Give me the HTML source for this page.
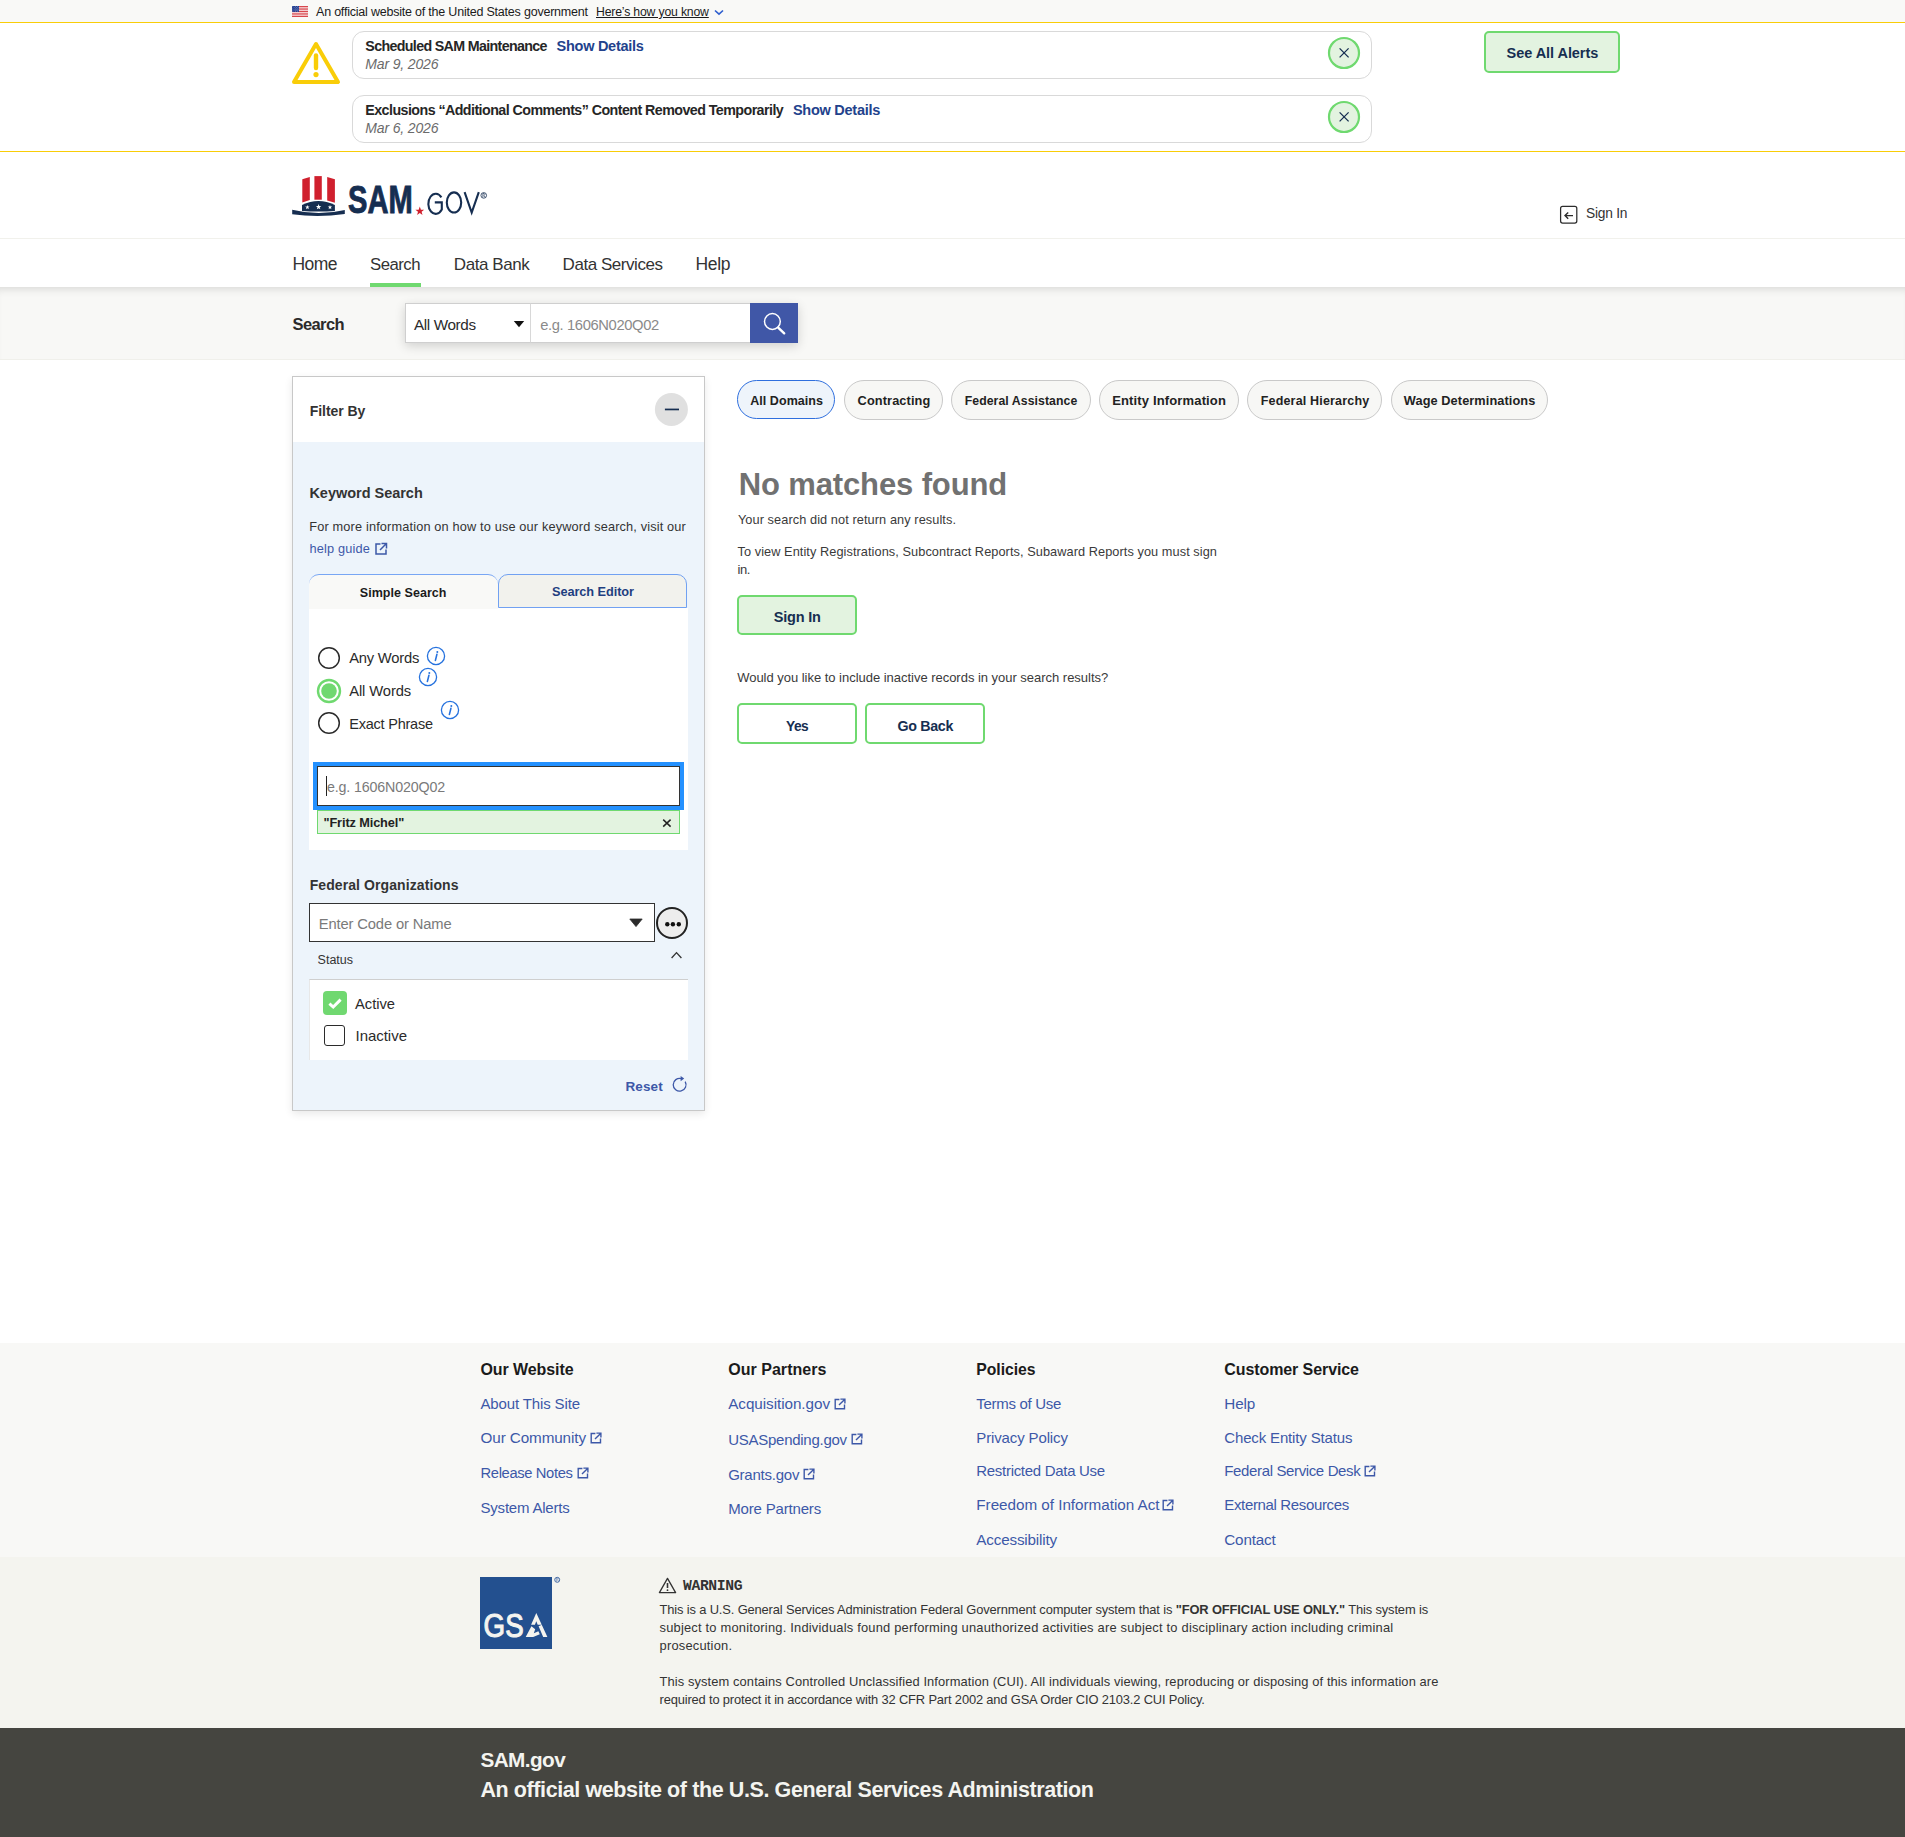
<!DOCTYPE html>
<html><head><meta charset="utf-8"><title>SAM.gov Search</title>
<style>
html,body{margin:0;padding:0}
body{width:1905px;height:1837px;position:relative;overflow:hidden;background:#fff;font-family:"Liberation Sans",sans-serif}
.abs{position:absolute;box-sizing:content-box}
.t{position:absolute;white-space:nowrap;line-height:1}
svg{overflow:visible}
</style></head><body>
<div class="abs" style="left:0;top:0;width:1905px;height:22px;background:#f9f9f7"></div>
<svg class="abs" style="left:292px;top:6px" width="16" height="11" viewBox="0 0 16 11">
<rect width="16" height="11" fill="#fff"/>
<g fill="#d0262e"><rect y="0.000" width="16" height="0.846"/><rect y="1.692" width="16" height="0.846"/><rect y="3.385" width="16" height="0.846"/><rect y="5.077" width="16" height="0.846"/><rect y="6.769" width="16" height="0.846"/><rect y="8.462" width="16" height="0.846"/><rect y="10.154" width="16" height="0.846"/></g>
<rect width="7" height="5.9" fill="#1f3b8f"/>
<g fill="#fff"><circle cx="0.90" cy="0.80" r=".38"/><circle cx="3.30" cy="0.80" r=".38"/><circle cx="5.70" cy="0.80" r=".38"/><circle cx="2.10" cy="1.85" r=".38"/><circle cx="4.50" cy="1.85" r=".38"/><circle cx="6.90" cy="1.85" r=".38"/><circle cx="0.90" cy="2.90" r=".38"/><circle cx="3.30" cy="2.90" r=".38"/><circle cx="5.70" cy="2.90" r=".38"/><circle cx="2.10" cy="3.95" r=".38"/><circle cx="4.50" cy="3.95" r=".38"/><circle cx="6.90" cy="3.95" r=".38"/><circle cx="0.90" cy="5.00" r=".38"/><circle cx="3.30" cy="5.00" r=".38"/><circle cx="5.70" cy="5.00" r=".38"/></g>
</svg>
<div class="t" style="left:316.00px;top:6.00px;font-size:12.5px;font-weight:normal;font-style:normal;font-family:'Liberation Sans',sans-serif;letter-spacing:-0.211px;color:#1b1b1b;">An official website of the United States government</div>
<div class="t" style="left:596.00px;top:6.00px;font-size:12.25px;font-weight:normal;font-style:normal;font-family:'Liberation Sans',sans-serif;letter-spacing:-0.181px;color:#1b1b1b;text-decoration:underline;text-underline-offset:1px">Here’s how you know</div>
<svg class="abs" style="left:714px;top:9px" width="10" height="7" viewBox="0 0 10 7"><path d="M1 1.5 L5 5.2 L9 1.5" fill="none" stroke="#2f5fcf" stroke-width="1.6"/></svg>
<div class="abs" style="left:0;top:22px;width:1905px;height:1px;background:#f9cd08"></div>
<div class="abs" style="left:0;top:151px;width:1905px;height:1px;background:#f9cd08"></div>
<svg class="abs" style="left:290px;top:40px" width="52" height="46" viewBox="0 0 52 46">
<path d="M26 4 L48 42 L4 42 Z" fill="none" stroke="#f9cd08" stroke-width="4" stroke-linejoin="round"/>
<path d="M26 15.5 L26 28" stroke="#f9cd08" stroke-width="4.4" stroke-linecap="round"/>
<circle cx="26" cy="34.6" r="2.6" fill="#f9cd08"/>
</svg>
<div class="abs" style="left:352px;top:31px;width:1018px;height:46px;border:1px solid #d9d9d9;border-radius:12px;background:#fff"></div>
<svg class="abs" style="left:1327px;top:35.6px" width="34" height="34" viewBox="0 0 34 34">
<circle cx="17" cy="17" r="15" fill="#e3f3e0" stroke="#6fd96f" stroke-width="2.2"/>
<path d="M12.6 12.4 L21.6 21.4 M21.6 12.4 L12.6 21.4" stroke="#162e51" stroke-width="1.3"/>
</svg>
<div class="abs" style="left:352px;top:95px;width:1018px;height:46px;border:1px solid #d9d9d9;border-radius:12px;background:#fff"></div>
<svg class="abs" style="left:1327px;top:99.6px" width="34" height="34" viewBox="0 0 34 34">
<circle cx="17" cy="17" r="15" fill="#e3f3e0" stroke="#6fd96f" stroke-width="2.2"/>
<path d="M12.6 12.4 L21.6 21.4 M21.6 12.4 L12.6 21.4" stroke="#162e51" stroke-width="1.3"/>
</svg>
<div class="t" style="left:365.30px;top:39.00px;font-size:14.25px;font-weight:bold;font-style:normal;font-family:'Liberation Sans',sans-serif;letter-spacing:-0.656px;color:#262626;">Scheduled SAM Maintenance</div>
<div class="t" style="left:556.60px;top:39.00px;font-size:14.5px;font-weight:bold;font-style:normal;font-family:'Liberation Sans',sans-serif;letter-spacing:-0.277px;color:#22428c;">Show Details</div>
<div class="t" style="left:365.30px;top:57.00px;font-size:14.0px;font-weight:normal;font-style:italic;font-family:'Liberation Sans',sans-serif;letter-spacing:-0.150px;color:#6b6b6b;">Mar 9, 2026</div>
<div class="t" style="left:365.30px;top:103.00px;font-size:14.25px;font-weight:bold;font-style:normal;font-family:'Liberation Sans',sans-serif;letter-spacing:-0.553px;color:#262626;">Exclusions “Additional Comments” Content Removed Temporarily</div>
<div class="t" style="left:792.90px;top:103.00px;font-size:14.5px;font-weight:bold;font-style:normal;font-family:'Liberation Sans',sans-serif;letter-spacing:-0.250px;color:#22428c;">Show Details</div>
<div class="t" style="left:365.30px;top:121.00px;font-size:14.0px;font-weight:normal;font-style:italic;font-family:'Liberation Sans',sans-serif;letter-spacing:-0.150px;color:#6b6b6b;">Mar 6, 2026</div>
<div class="abs" style="left:1484px;top:31px;width:132px;height:38px;border:2px solid #6fd96f;border-radius:5px;background:#e3f3e0"></div>
<div class="t" style="left:1506.60px;top:46.00px;font-size:14.5px;font-weight:bold;font-style:normal;font-family:'Liberation Sans',sans-serif;letter-spacing:-0.054px;color:#162e51;">See All Alerts</div>
<svg class="abs" style="left:290px;top:174px" width="200" height="46" viewBox="290 174 200 46">
<g fill="#d0202e">
<path d="M302.3 179.2 L309.8 176.9 L309.8 200 L302.3 202.6 Z"/>
<path d="M314.4 176.1 L321.8 176.1 L321.8 199.7 L314.4 199.7 Z"/>
<path d="M327.2 176.9 L334.9 179.3 L334.9 202.8 L327.2 200.5 Z"/>
</g>
<path d="M302 210.9 L302 204.9 Q318.4 197.3 334.9 204.9 L334.9 210.9 Q318.4 212.2 302 210.9 Z" fill="#162e51"/>
<path d="M307.40,204.90 L307.96,206.52 L309.68,206.56 L308.31,207.60 L308.81,209.24 L307.40,208.26 L305.99,209.24 L306.49,207.60 L305.12,206.56 L306.84,206.52 Z M318.60,204.10 L319.28,206.06 L321.36,206.10 L319.70,207.36 L320.30,209.35 L318.60,208.16 L316.90,209.35 L317.50,207.36 L315.84,206.10 L317.92,206.06 Z M330.00,204.90 L330.56,206.52 L332.28,206.56 L330.91,207.60 L331.41,209.24 L330.00,208.26 L328.59,209.24 L329.09,207.60 L327.72,206.56 L329.44,206.52 Z" fill="#fff"/>
<path d="M292.2 209.7 Q318.4 216.2 344.8 209.9 L344.8 213.9 Q318.4 218 292.2 214.2 Z" fill="#162e51"/>
<text x="348.1" y="213.1" font-family="Liberation Sans" font-weight="bold" font-size="38.2" fill="#162e51" stroke="#162e51" stroke-width="0.9" textLength="64.6" lengthAdjust="spacingAndGlyphs">SAM</text>
<path d="M419.80,206.60 L420.92,209.66 L424.17,209.78 L421.61,211.79 L422.50,214.92 L419.80,213.10 L417.10,214.92 L417.99,211.79 L415.43,209.78 L418.68,209.66 Z" fill="#d0202e"/>
<g fill="none" stroke="#162e51" stroke-width="2.1">
<path d="M441.4 197.4 A7.4 10.05 0 1 0 441.8 209.6 L441.8 202.4 L434.8 202.4"/>
<ellipse cx="454" cy="202.45" rx="7.2" ry="10.05"/>
<path d="M464.6 192.2 L471.7 212.5 L478.8 192.2"/>
</g>
<circle cx="483.75" cy="195.4" r="2.8" fill="none" stroke="#162e51" stroke-width=".8"/>
<path d="M482.9 197.3 L482.9 193.6 L484.2 193.6 Q485.4 194.4 484.1 195.5 L485.1 197.3" fill="none" stroke="#162e51" stroke-width=".7"/>
</svg>
<svg class="abs" style="left:1559px;top:205px" width="20" height="20" viewBox="0 0 20 20">
<rect x="1.6" y="1.4" width="16.2" height="16.6" rx="2" fill="none" stroke="#2d2d2d" stroke-width="1.25"/>
<path d="M14 10.6 L6 10.6 M9.2 7.4 L6 10.6 L9.2 13.8" fill="none" stroke="#2d2d2d" stroke-width="1.4"/>
</svg>
<div class="t" style="left:1586.00px;top:207.00px;font-size:13.75px;font-weight:normal;font-style:normal;font-family:'Liberation Sans',sans-serif;letter-spacing:-0.217px;color:#333;">Sign In</div>
<div class="abs" style="left:0;top:238px;width:1905px;height:1px;background:#f1f1ec"></div>
<div class="t" style="left:292.60px;top:256.00px;font-size:17.5px;font-weight:normal;font-style:normal;font-family:'Liberation Sans',sans-serif;letter-spacing:-0.633px;color:#333;">Home</div>
<div class="t" style="left:370.00px;top:257.00px;font-size:16.75px;font-weight:normal;font-style:normal;font-family:'Liberation Sans',sans-serif;letter-spacing:-0.510px;color:#333;">Search</div>
<div class="t" style="left:453.80px;top:256.00px;font-size:17.0px;font-weight:normal;font-style:normal;font-family:'Liberation Sans',sans-serif;letter-spacing:-0.419px;color:#333;">Data Bank</div>
<div class="t" style="left:562.60px;top:256.00px;font-size:17.0px;font-weight:normal;font-style:normal;font-family:'Liberation Sans',sans-serif;letter-spacing:-0.458px;color:#333;">Data Services</div>
<div class="t" style="left:695.60px;top:256.00px;font-size:17.5px;font-weight:normal;font-style:normal;font-family:'Liberation Sans',sans-serif;letter-spacing:-0.400px;color:#333;">Help</div>
<div class="abs" style="left:370px;top:283px;width:51px;height:4px;background:#6fd96f"></div>
<div class="abs" style="left:0;top:287px;width:1905px;height:72px;background:#f8f8f6;box-shadow:inset 0 8px 8px -6px rgba(0,0,0,.13)"></div>
<div class="abs" style="left:0;top:359px;width:1905px;height:1px;background:#f0f0eb"></div>
<div class="t" style="left:292.50px;top:316.00px;font-size:16.5px;font-weight:bold;font-style:normal;font-family:'Liberation Sans',sans-serif;letter-spacing:-0.590px;color:#2b2b2b;">Search</div>
<div class="abs" style="left:405px;top:303px;width:393px;height:40px;box-shadow:0 3px 10px rgba(0,0,0,.16)"></div>
<div class="abs" style="left:405px;top:303px;width:124px;height:38px;border:1px solid #cfcfcf;background:#fff"></div>
<div class="t" style="left:414.00px;top:317.00px;font-size:15.25px;font-weight:normal;font-style:normal;font-family:'Liberation Sans',sans-serif;letter-spacing:-0.369px;color:#2b2b2b;">All Words</div>
<svg class="abs" style="left:513px;top:320px" width="12" height="8" viewBox="0 0 12 8"><path d="M0.8 1 L11.2 1 L6 7.2 Z" fill="#111"/></svg>
<div class="abs" style="left:530px;top:303px;width:219px;height:38px;border:1px solid #cfcfcf;border-left:1px solid #d8d8d8;background:#fff"></div>
<div class="t" style="left:540.20px;top:318.00px;font-size:14.75px;font-weight:normal;font-style:normal;font-family:'Liberation Sans',sans-serif;letter-spacing:-0.377px;color:#8a8a8a;">e.g. 1606N020Q02</div>
<div class="abs" style="left:750px;top:303px;width:48px;height:40px;background:#4057a7"></div>
<svg class="abs" style="left:760px;top:310px" width="28" height="28" viewBox="0 0 28 28">
<circle cx="12.4" cy="11.5" r="7.9" fill="none" stroke="#fff" stroke-width="1.5"/>
<path d="M18.2 17.6 L24.2 23.3" stroke="#fff" stroke-width="2.4" stroke-linecap="round"/>
</svg>
<div class="abs" style="left:292px;top:376px;width:411px;height:733px;border:1px solid #c8c8c8;background:#edf4fb;box-shadow:0 3px 8px rgba(0,0,0,.09)"></div>
<div class="abs" style="left:293px;top:377px;width:411px;height:65px;background:#fff"></div>
<div class="t" style="left:309.80px;top:404.00px;font-size:14.0px;font-weight:bold;font-style:normal;font-family:'Liberation Sans',sans-serif;letter-spacing:-0.062px;color:#333;">Filter By</div>
<svg class="abs" style="left:654px;top:392px" width="34" height="34" viewBox="0 0 34 34"><circle cx="17.4" cy="17.4" r="16.5" fill="#e0e0e0"/><rect x="10.9" y="16.6" width="14.1" height="1.7" fill="#162e51"/></svg>
<div class="t" style="left:309.40px;top:486.00px;font-size:14.5px;font-weight:bold;font-style:normal;font-family:'Liberation Sans',sans-serif;letter-spacing:-0.019px;color:#333;">Keyword Search</div>
<div class="t" style="left:309.30px;top:521.00px;font-size:12.75px;font-weight:normal;font-style:normal;font-family:'Liberation Sans',sans-serif;letter-spacing:0.150px;color:#333;">For more information on how to use our keyword search, visit our</div>
<div class="t" style="left:309.40px;top:543.00px;font-size:12.75px;font-weight:normal;font-style:normal;font-family:'Liberation Sans',sans-serif;letter-spacing:0.172px;color:#3d58a8;">help guide</div>
<svg class="abs" style="left:374px;top:542px" width="14" height="14" viewBox="0 0 14 14"><path d="M6.5 2 L2 2 L2 12 L12 12 L12 7.5" fill="none" stroke="#3d58a8" stroke-width="1.5"/><path d="M7.5 1.5 L12.5 1.5 L12.5 6.5 M12.2 1.8 L6 8" fill="none" stroke="#3d58a8" stroke-width="1.5"/></svg>
<div class="abs" style="left:309px;top:608px;width:379px;height:242px;background:#fff"></div>
<div class="abs" style="left:309px;top:574px;width:189px;height:34px;background:#f9f9f7;border-top:1.5px solid #78a6f4;border-radius:10px 10px 0 0"></div>
<div class="abs" style="left:498px;top:574px;width:187px;height:31.5px;background:#f2f2ed;border:1.5px solid #71a1f2;border-radius:10px 10px 0 0"></div>
<div class="t" style="left:359.80px;top:587.00px;font-size:12.5px;font-weight:bold;font-style:normal;font-family:'Liberation Sans',sans-serif;letter-spacing:0.046px;color:#1b1b1b;">Simple Search</div>
<div class="t" style="left:552.00px;top:586.00px;font-size:12.75px;font-weight:bold;font-style:normal;font-family:'Liberation Sans',sans-serif;letter-spacing:-0.075px;color:#1f3f80;">Search Editor</div>
<svg class="abs" style="left:317px;top:646px" width="24" height="24" viewBox="0 0 24 24"><circle cx="12" cy="12" r="10.3" fill="#fff" stroke="#2b2b2b" stroke-width="1.5"/></svg>
<svg class="abs" style="left:317px;top:711px" width="24" height="24" viewBox="0 0 24 24"><circle cx="12" cy="12" r="10.3" fill="#fff" stroke="#2b2b2b" stroke-width="1.5"/></svg>
<svg class="abs" style="left:316px;top:678px" width="26" height="26" viewBox="0 0 26 26"><circle cx="13" cy="13" r="11" fill="#fff" stroke="#6fd96f" stroke-width="2.4"/><circle cx="13" cy="13" r="7.8" fill="#70d870"/></svg>
<div class="t" style="left:349.20px;top:651.00px;font-size:14.75px;font-weight:normal;font-style:normal;font-family:'Liberation Sans',sans-serif;letter-spacing:-0.219px;color:#2b2b2b;">Any Words</div>
<div class="t" style="left:349.20px;top:684.00px;font-size:14.75px;font-weight:normal;font-style:normal;font-family:'Liberation Sans',sans-serif;letter-spacing:-0.100px;color:#2b2b2b;">All Words</div>
<div class="t" style="left:349.20px;top:717.00px;font-size:14.5px;font-weight:normal;font-style:normal;font-family:'Liberation Sans',sans-serif;letter-spacing:-0.214px;color:#2b2b2b;">Exact Phrase</div>
<svg class="abs" style="left:426.2px;top:646.2px" width="20" height="20" viewBox="0 0 20 20"><circle cx="10" cy="10" r="8.6" fill="none" stroke="#2672de" stroke-width="1.3"/><path d="M10.9 8.4 L9.4 14.4" stroke="#2672de" stroke-width="1.6" stroke-linecap="round"/><circle cx="11.3" cy="5.9" r="1" fill="#2672de"/></svg>
<svg class="abs" style="left:418.2px;top:667.2px" width="20" height="20" viewBox="0 0 20 20"><circle cx="10" cy="10" r="8.6" fill="none" stroke="#2672de" stroke-width="1.3"/><path d="M10.9 8.4 L9.4 14.4" stroke="#2672de" stroke-width="1.6" stroke-linecap="round"/><circle cx="11.3" cy="5.9" r="1" fill="#2672de"/></svg>
<svg class="abs" style="left:440.1px;top:700.2px" width="20" height="20" viewBox="0 0 20 20"><circle cx="10" cy="10" r="8.6" fill="none" stroke="#2672de" stroke-width="1.3"/><path d="M10.9 8.4 L9.4 14.4" stroke="#2672de" stroke-width="1.6" stroke-linecap="round"/><circle cx="11.3" cy="5.9" r="1" fill="#2672de"/></svg>
<div class="abs" style="left:313px;top:762px;width:371px;height:48px;background:#2491ff"></div>
<div class="abs" style="left:317px;top:766px;width:361px;height:38px;border:1px solid #333;background:#fff"></div>
<div class="t" style="left:327.00px;top:780.00px;font-size:14.25px;font-weight:normal;font-style:normal;font-family:'Liberation Sans',sans-serif;letter-spacing:-0.150px;color:#7a7a7a;">e.g. 1606N020Q02</div>
<div class="abs" style="left:326px;top:776px;width:1px;height:20px;background:#222"></div>
<div class="abs" style="left:317px;top:810px;width:361px;height:22px;border:1px solid #6fd96f;background:#e3f3e0"></div>
<div class="t" style="left:323.50px;top:817.00px;font-size:12.75px;font-weight:bold;font-style:normal;font-family:'Liberation Sans',sans-serif;letter-spacing:-0.115px;color:#222;">&quot;Fritz Michel&quot;</div>
<svg class="abs" style="left:661px;top:817px" width="12" height="12" viewBox="0 0 12 12"><path d="M2.2 2.6 L9.6 9.6 M9.6 2.6 L2.2 9.6" stroke="#222" stroke-width="1.5"/></svg>
<div class="t" style="left:309.70px;top:878.00px;font-size:14.0px;font-weight:bold;font-style:normal;font-family:'Liberation Sans',sans-serif;letter-spacing:0.087px;color:#333;">Federal Organizations</div>
<div class="abs" style="left:309px;top:903px;width:344px;height:37px;border:1.5px solid #333;background:#fff"></div>
<div class="t" style="left:318.70px;top:917.00px;font-size:14.75px;font-weight:normal;font-style:normal;font-family:'Liberation Sans',sans-serif;letter-spacing:-0.132px;color:#7a7a7a;">Enter Code or Name</div>
<svg class="abs" style="left:629px;top:918px" width="14" height="10" viewBox="0 0 14 10"><path d="M0.8 1 L13.2 1 L7 8.6 Z" fill="#2b2b2b" stroke="#2b2b2b" stroke-width=".8" stroke-linejoin="round"/></svg>
<svg class="abs" style="left:655px;top:906px" width="34" height="34" viewBox="0 0 34 34"><circle cx="17" cy="17" r="15" fill="#ededed" stroke="#222" stroke-width="2"/><circle cx="12.3" cy="18.2" r="2.2" fill="#111"/><circle cx="17.9" cy="18.2" r="2.2" fill="#111"/><circle cx="23.8" cy="18.2" r="2.2" fill="#111"/></svg>
<div class="t" style="left:317.60px;top:954.00px;font-size:12.5px;font-weight:normal;font-style:normal;font-family:'Liberation Sans',sans-serif;letter-spacing:-0.010px;color:#333;">Status</div>
<svg class="abs" style="left:670px;top:950px" width="13" height="10" viewBox="0 0 13 10"><path d="M1.6 8 L6.5 2.6 L11.4 8" fill="none" stroke="#333" stroke-width="1.3"/></svg>
<div class="abs" style="left:309px;top:979px;width:378px;height:80px;border-top:1.5px solid #cfcfcf;border-left:1px solid #e8e8e8;background:#fff"></div>
<svg class="abs" style="left:323px;top:991px" width="24" height="24" viewBox="0 0 24 24"><rect width="24" height="24" rx="4" fill="#70d870"/><path d="M6.4 12.6 L10.2 16 L17.6 8.6" fill="none" stroke="#fff" stroke-width="3"/></svg>
<div class="abs" style="left:324px;top:1025px;width:19px;height:19px;border:1.6px solid #2b2b2b;border-radius:3px;background:#fff"></div>
<div class="t" style="left:355.00px;top:997.00px;font-size:14.75px;font-weight:normal;font-style:normal;font-family:'Liberation Sans',sans-serif;letter-spacing:-0.030px;color:#2b2b2b;">Active</div>
<div class="t" style="left:355.50px;top:1028.00px;font-size:15.0px;font-weight:normal;font-style:normal;font-family:'Liberation Sans',sans-serif;letter-spacing:-0.029px;color:#2b2b2b;">Inactive</div>
<div class="t" style="left:625.50px;top:1080.00px;font-size:13.5px;font-weight:bold;font-style:normal;font-family:'Liberation Sans',sans-serif;letter-spacing:0.113px;color:#3d58a8;">Reset</div>
<svg class="abs" style="left:671px;top:1074px" width="18" height="19" viewBox="0 0 18 19"><path d="M10.4 4.6 A6.4 6.4 0 1 0 14.2 7.6" fill="none" stroke="#3d58a8" stroke-width="1.3"/><path d="M9.6 2 L13.2 4.4 L9.6 7.2 Z" fill="#3d58a8"/></svg>
<div class="abs" style="left:737px;top:380px;width:96.0px;height:37px;border:1.5px solid #2f6fde;border-radius:20px;background:#eef4fb"></div>
<div class="t" style="left:750.20px;top:395.00px;font-size:12.5px;font-weight:bold;font-style:normal;font-family:'Liberation Sans',sans-serif;letter-spacing:0.055px;color:#222;">All Domains</div>
<div class="abs" style="left:844px;top:380px;width:96.5px;height:38px;border:1px solid #c9c9c9;border-radius:20px;background:#f7f7f5"></div>
<div class="t" style="left:857.60px;top:395.00px;font-size:12.75px;font-weight:bold;font-style:normal;font-family:'Liberation Sans',sans-serif;letter-spacing:0.115px;color:#222;">Contracting</div>
<div class="abs" style="left:951px;top:380px;width:137.5px;height:38px;border:1px solid #c9c9c9;border-radius:20px;background:#f7f7f5"></div>
<div class="t" style="left:964.70px;top:395.00px;font-size:12.25px;font-weight:bold;font-style:normal;font-family:'Liberation Sans',sans-serif;letter-spacing:0.076px;color:#222;">Federal Assistance</div>
<div class="abs" style="left:1099.2px;top:380px;width:137.4px;height:38px;border:1px solid #c9c9c9;border-radius:20px;background:#f7f7f5"></div>
<div class="t" style="left:1112.20px;top:394.00px;font-size:13.0px;font-weight:bold;font-style:normal;font-family:'Liberation Sans',sans-serif;letter-spacing:0.147px;color:#222;">Entity Information</div>
<div class="abs" style="left:1247.1px;top:380px;width:133.4px;height:38px;border:1px solid #c9c9c9;border-radius:20px;background:#f7f7f5"></div>
<div class="t" style="left:1260.70px;top:395.00px;font-size:12.5px;font-weight:bold;font-style:normal;font-family:'Liberation Sans',sans-serif;letter-spacing:0.181px;color:#222;">Federal Hierarchy</div>
<div class="abs" style="left:1391.2px;top:380px;width:155.3px;height:38px;border:1px solid #c9c9c9;border-radius:20px;background:#f7f7f5"></div>
<div class="t" style="left:1403.80px;top:395.00px;font-size:12.75px;font-weight:bold;font-style:normal;font-family:'Liberation Sans',sans-serif;letter-spacing:0.089px;color:#222;">Wage Determinations</div>
<div class="t" style="left:738.70px;top:469.00px;font-size:31.0px;font-weight:bold;font-style:normal;font-family:'Liberation Sans',sans-serif;letter-spacing:-0.127px;color:#717171;">No matches found</div>
<div class="t" style="left:737.90px;top:514.00px;font-size:12.75px;font-weight:normal;font-style:normal;font-family:'Liberation Sans',sans-serif;letter-spacing:0.082px;color:#3a3a3a;">Your search did not return any results.</div>
<div class="t" style="left:737.50px;top:546.00px;font-size:12.75px;font-weight:normal;font-style:normal;font-family:'Liberation Sans',sans-serif;letter-spacing:0.067px;color:#3a3a3a;">To view Entity Registrations, Subcontract Reports, Subaward Reports you must sign</div>
<div class="t" style="left:737.50px;top:562.50px;font-size:13.0px;font-weight:normal;font-style:normal;font-family:'Liberation Sans',sans-serif;letter-spacing:-0.375px;color:#3a3a3a;">in.</div>
<div class="abs" style="left:737px;top:595px;width:116px;height:36px;border:2px solid #6fd96f;border-radius:5px;background:#e3f3e0"></div>
<div class="t" style="left:773.80px;top:610.00px;font-size:14.5px;font-weight:bold;font-style:normal;font-family:'Liberation Sans',sans-serif;letter-spacing:-0.192px;color:#162e51;">Sign In</div>
<div class="t" style="left:737.20px;top:671.00px;font-size:13.0px;font-weight:normal;font-style:normal;font-family:'Liberation Sans',sans-serif;letter-spacing:-0.025px;color:#3a3a3a;">Would you like to include inactive records in your search results?</div>
<div class="abs" style="left:737px;top:703px;width:116px;height:37px;border:2px solid #6fd96f;border-radius:5px;background:#fff"></div>
<div class="abs" style="left:865px;top:703px;width:116px;height:37px;border:2px solid #6fd96f;border-radius:5px;background:#fff"></div>
<div class="t" style="left:786.00px;top:720.00px;font-size:13.75px;font-weight:bold;font-style:normal;font-family:'Liberation Sans',sans-serif;letter-spacing:-0.500px;color:#162e51;">Yes</div>
<div class="t" style="left:897.40px;top:719.00px;font-size:14.25px;font-weight:bold;font-style:normal;font-family:'Liberation Sans',sans-serif;letter-spacing:-0.308px;color:#162e51;">Go Back</div>
<div class="abs" style="left:0;top:1343px;width:1905px;height:214px;background:#f8f8f6"></div>
<div class="abs" style="left:0;top:1557px;width:1905px;height:171px;background:#f4f4ef"></div>
<div class="abs" style="left:0;top:1728px;width:1905px;height:109px;background:#454540"></div>
<div class="t" style="left:480.50px;top:1362.00px;font-size:16.0px;font-weight:bold;font-style:normal;font-family:'Liberation Sans',sans-serif;letter-spacing:-0.085px;color:#1b1b1b;">Our Website</div>
<div class="t" style="left:728.20px;top:1362.00px;font-size:16.0px;font-weight:bold;font-style:normal;font-family:'Liberation Sans',sans-serif;letter-spacing:0.036px;color:#1b1b1b;">Our Partners</div>
<div class="t" style="left:976.30px;top:1362.00px;font-size:15.75px;font-weight:bold;font-style:normal;font-family:'Liberation Sans',sans-serif;letter-spacing:-0.036px;color:#1b1b1b;">Policies</div>
<div class="t" style="left:1224.30px;top:1362.00px;font-size:16.0px;font-weight:bold;font-style:normal;font-family:'Liberation Sans',sans-serif;letter-spacing:-0.090px;color:#1b1b1b;">Customer Service</div>
<div class="t" style="left:480.50px;top:1396.00px;font-size:15.0px;font-weight:normal;font-style:normal;font-family:'Liberation Sans',sans-serif;letter-spacing:-0.139px;color:#3d58a8;">About This Site</div>
<div class="t" style="left:480.50px;top:1430.00px;font-size:15.25px;font-weight:normal;font-style:normal;font-family:'Liberation Sans',sans-serif;letter-spacing:-0.104px;color:#3d58a8;">Our Community</div>
<svg class="abs" style="left:590.1px;top:1431.5px" width="12" height="12" viewBox="0 0 12 12"><path d="M5.4 1.5 L1.2 1.5 L1.2 10.8 L10.5 10.8 L10.5 6.6" fill="none" stroke="#3d58a8" stroke-width="1.4"/><path d="M6.4 1.1 L10.9 1.1 L10.9 5.6 M10.6 1.4 L5 7" fill="none" stroke="#3d58a8" stroke-width="1.4"/></svg>
<div class="t" style="left:480.50px;top:1466.00px;font-size:14.75px;font-weight:normal;font-style:normal;font-family:'Liberation Sans',sans-serif;letter-spacing:-0.363px;color:#3d58a8;">Release Notes</div>
<svg class="abs" style="left:576.5px;top:1466.5px" width="12" height="12" viewBox="0 0 12 12"><path d="M5.4 1.5 L1.2 1.5 L1.2 10.8 L10.5 10.8 L10.5 6.6" fill="none" stroke="#3d58a8" stroke-width="1.4"/><path d="M6.4 1.1 L10.9 1.1 L10.9 5.6 M10.6 1.4 L5 7" fill="none" stroke="#3d58a8" stroke-width="1.4"/></svg>
<div class="t" style="left:480.50px;top:1500.00px;font-size:15.0px;font-weight:normal;font-style:normal;font-family:'Liberation Sans',sans-serif;letter-spacing:-0.208px;color:#3d58a8;">System Alerts</div>
<div class="t" style="left:728.20px;top:1396.00px;font-size:15.25px;font-weight:normal;font-style:normal;font-family:'Liberation Sans',sans-serif;letter-spacing:-0.054px;color:#3d58a8;">Acquisition.gov</div>
<svg class="abs" style="left:834.0px;top:1397.5px" width="12" height="12" viewBox="0 0 12 12"><path d="M5.4 1.5 L1.2 1.5 L1.2 10.8 L10.5 10.8 L10.5 6.6" fill="none" stroke="#3d58a8" stroke-width="1.4"/><path d="M6.4 1.1 L10.9 1.1 L10.9 5.6 M10.6 1.4 L5 7" fill="none" stroke="#3d58a8" stroke-width="1.4"/></svg>
<div class="t" style="left:728.20px;top:1431.50px;font-size:15.0px;font-weight:normal;font-style:normal;font-family:'Liberation Sans',sans-serif;letter-spacing:-0.264px;color:#3d58a8;">USASpending.gov</div>
<svg class="abs" style="left:850.5px;top:1433.0px" width="12" height="12" viewBox="0 0 12 12"><path d="M5.4 1.5 L1.2 1.5 L1.2 10.8 L10.5 10.8 L10.5 6.6" fill="none" stroke="#3d58a8" stroke-width="1.4"/><path d="M6.4 1.1 L10.9 1.1 L10.9 5.6 M10.6 1.4 L5 7" fill="none" stroke="#3d58a8" stroke-width="1.4"/></svg>
<div class="t" style="left:728.20px;top:1466.50px;font-size:15.0px;font-weight:normal;font-style:normal;font-family:'Liberation Sans',sans-serif;letter-spacing:-0.239px;color:#3d58a8;">Grants.gov</div>
<svg class="abs" style="left:803.3px;top:1468.0px" width="12" height="12" viewBox="0 0 12 12"><path d="M5.4 1.5 L1.2 1.5 L1.2 10.8 L10.5 10.8 L10.5 6.6" fill="none" stroke="#3d58a8" stroke-width="1.4"/><path d="M6.4 1.1 L10.9 1.1 L10.9 5.6 M10.6 1.4 L5 7" fill="none" stroke="#3d58a8" stroke-width="1.4"/></svg>
<div class="t" style="left:728.20px;top:1501.00px;font-size:15.0px;font-weight:normal;font-style:normal;font-family:'Liberation Sans',sans-serif;letter-spacing:-0.171px;color:#3d58a8;">More Partners</div>
<div class="t" style="left:976.30px;top:1396.00px;font-size:15.0px;font-weight:normal;font-style:normal;font-family:'Liberation Sans',sans-serif;letter-spacing:-0.305px;color:#3d58a8;">Terms of Use</div>
<div class="t" style="left:976.30px;top:1430.00px;font-size:15.0px;font-weight:normal;font-style:normal;font-family:'Liberation Sans',sans-serif;letter-spacing:-0.135px;color:#3d58a8;">Privacy Policy</div>
<div class="t" style="left:976.30px;top:1463.00px;font-size:15.0px;font-weight:normal;font-style:normal;font-family:'Liberation Sans',sans-serif;letter-spacing:-0.300px;color:#3d58a8;">Restricted Data Use</div>
<div class="t" style="left:976.30px;top:1497.00px;font-size:15.25px;font-weight:normal;font-style:normal;font-family:'Liberation Sans',sans-serif;letter-spacing:-0.030px;color:#3d58a8;">Freedom of Information Act</div>
<svg class="abs" style="left:1162.1px;top:1498.5px" width="12" height="12" viewBox="0 0 12 12"><path d="M5.4 1.5 L1.2 1.5 L1.2 10.8 L10.5 10.8 L10.5 6.6" fill="none" stroke="#3d58a8" stroke-width="1.4"/><path d="M6.4 1.1 L10.9 1.1 L10.9 5.6 M10.6 1.4 L5 7" fill="none" stroke="#3d58a8" stroke-width="1.4"/></svg>
<div class="t" style="left:976.30px;top:1532.00px;font-size:15.25px;font-weight:normal;font-style:normal;font-family:'Liberation Sans',sans-serif;letter-spacing:-0.188px;color:#3d58a8;">Accessibility</div>
<div class="t" style="left:1224.30px;top:1396.00px;font-size:15.25px;font-weight:normal;font-style:normal;font-family:'Liberation Sans',sans-serif;letter-spacing:-0.117px;color:#3d58a8;">Help</div>
<div class="t" style="left:1224.30px;top:1430.00px;font-size:15.0px;font-weight:normal;font-style:normal;font-family:'Liberation Sans',sans-serif;letter-spacing:-0.156px;color:#3d58a8;">Check Entity Status</div>
<div class="t" style="left:1224.30px;top:1463.00px;font-size:15.0px;font-weight:normal;font-style:normal;font-family:'Liberation Sans',sans-serif;letter-spacing:-0.366px;color:#3d58a8;">Federal Service Desk</div>
<svg class="abs" style="left:1363.7px;top:1464.5px" width="12" height="12" viewBox="0 0 12 12"><path d="M5.4 1.5 L1.2 1.5 L1.2 10.8 L10.5 10.8 L10.5 6.6" fill="none" stroke="#3d58a8" stroke-width="1.4"/><path d="M6.4 1.1 L10.9 1.1 L10.9 5.6 M10.6 1.4 L5 7" fill="none" stroke="#3d58a8" stroke-width="1.4"/></svg>
<div class="t" style="left:1224.30px;top:1497.00px;font-size:15.0px;font-weight:normal;font-style:normal;font-family:'Liberation Sans',sans-serif;letter-spacing:-0.353px;color:#3d58a8;">External Resources</div>
<div class="t" style="left:1224.30px;top:1532.00px;font-size:15.25px;font-weight:normal;font-style:normal;font-family:'Liberation Sans',sans-serif;letter-spacing:-0.192px;color:#3d58a8;">Contact</div>
<svg class="abs" style="left:480px;top:1577px" width="82" height="73" viewBox="0 0 82 73">
<rect x="0" y="0" width="72" height="72" fill="#23508f"/>
<text x="3.6" y="60.3" font-family="Liberation Sans" font-size="34" fill="#f4f4ef" stroke="#f4f4ef" stroke-width="1.1" textLength="40" lengthAdjust="spacingAndGlyphs">GS</text>
<path d="M56.3 35.9 L67.4 60 L63.2 60 L58.6 49.3 L61.9 47.7 L57.7 47.7 L56.3 44.2 L54.9 47.7 L51.1 47.7 Z" fill="#f4f4ef"/>
<path d="M45.7 60 L51.4 49.3 L55.2 52.2 L53.8 56.2 L58.4 54.2 L59.8 57.2 L53.2 60 Z" fill="#f4f4ef"/>
<circle cx="77.2" cy="2.8" r="2.5" fill="none" stroke="#4a6fa8" stroke-width="1"/>
<path d="M76.3 4.6 L76.3 1.2 L77.8 1.2 Q78.8 1.6 77.6 2.8 L78.6 4.6" fill="none" stroke="#4a6fa8" stroke-width=".6"/>
</svg>
<svg class="abs" style="left:658px;top:1577px" width="19" height="17" viewBox="0 0 19 17"><path d="M9.5 1.4 L17.6 15.6 L1.4 15.6 Z" fill="none" stroke="#333" stroke-width="1.3" stroke-linejoin="round"/><path d="M9.5 6 L9.5 11" stroke="#333" stroke-width="1.6"/><circle cx="9.5" cy="13.2" r=".9" fill="#333"/></svg>
<div class="t" style="left:683.00px;top:1579.00px;font-size:14.75px;font-weight:bold;font-style:normal;font-family:'Liberation Mono',monospace;letter-spacing:-0.408px;color:#333;">WARNING</div>
<div class="t" style="left:659.50px;top:1604px;font-size:12.9px;letter-spacing:-0.139px;color:#333">This is a U.S. General Services Administration Federal Government computer system that is <b>&quot;FOR OFFICIAL USE ONLY.&quot;</b> This system is</div>
<div class="t" style="left:659.50px;top:1622px;font-size:12.9px;letter-spacing:0.201px;color:#333">subject to monitoring. Individuals found performing unauthorized activities are subject to disciplinary action including criminal</div>
<div class="t" style="left:659.50px;top:1640px;font-size:12.9px;letter-spacing:0.209px;color:#333">prosecution.</div>
<div class="t" style="left:659.50px;top:1676px;font-size:12.9px;letter-spacing:0.101px;color:#333">This system contains Controlled Unclassified Information (CUI). All individuals viewing, reproducing or disposing of this information are</div>
<div class="t" style="left:659.50px;top:1694px;font-size:12.9px;letter-spacing:-0.156px;color:#333">required to protect it in accordance with 32 CFR Part 2002 and GSA Order CIO 2103.2 CUI Policy.</div>
<div class="t" style="left:480.40px;top:1750.00px;font-size:20.75px;font-weight:bold;font-style:normal;font-family:'Liberation Sans',sans-serif;letter-spacing:-0.575px;color:#f4f4f0;">SAM.gov</div>
<div class="t" style="left:480.40px;top:1780.00px;font-size:21.5px;font-weight:bold;font-style:normal;font-family:'Liberation Sans',sans-serif;letter-spacing:-0.400px;color:#f4f4f0;">An official website of the U.S. General Services Administration</div>
</body></html>
